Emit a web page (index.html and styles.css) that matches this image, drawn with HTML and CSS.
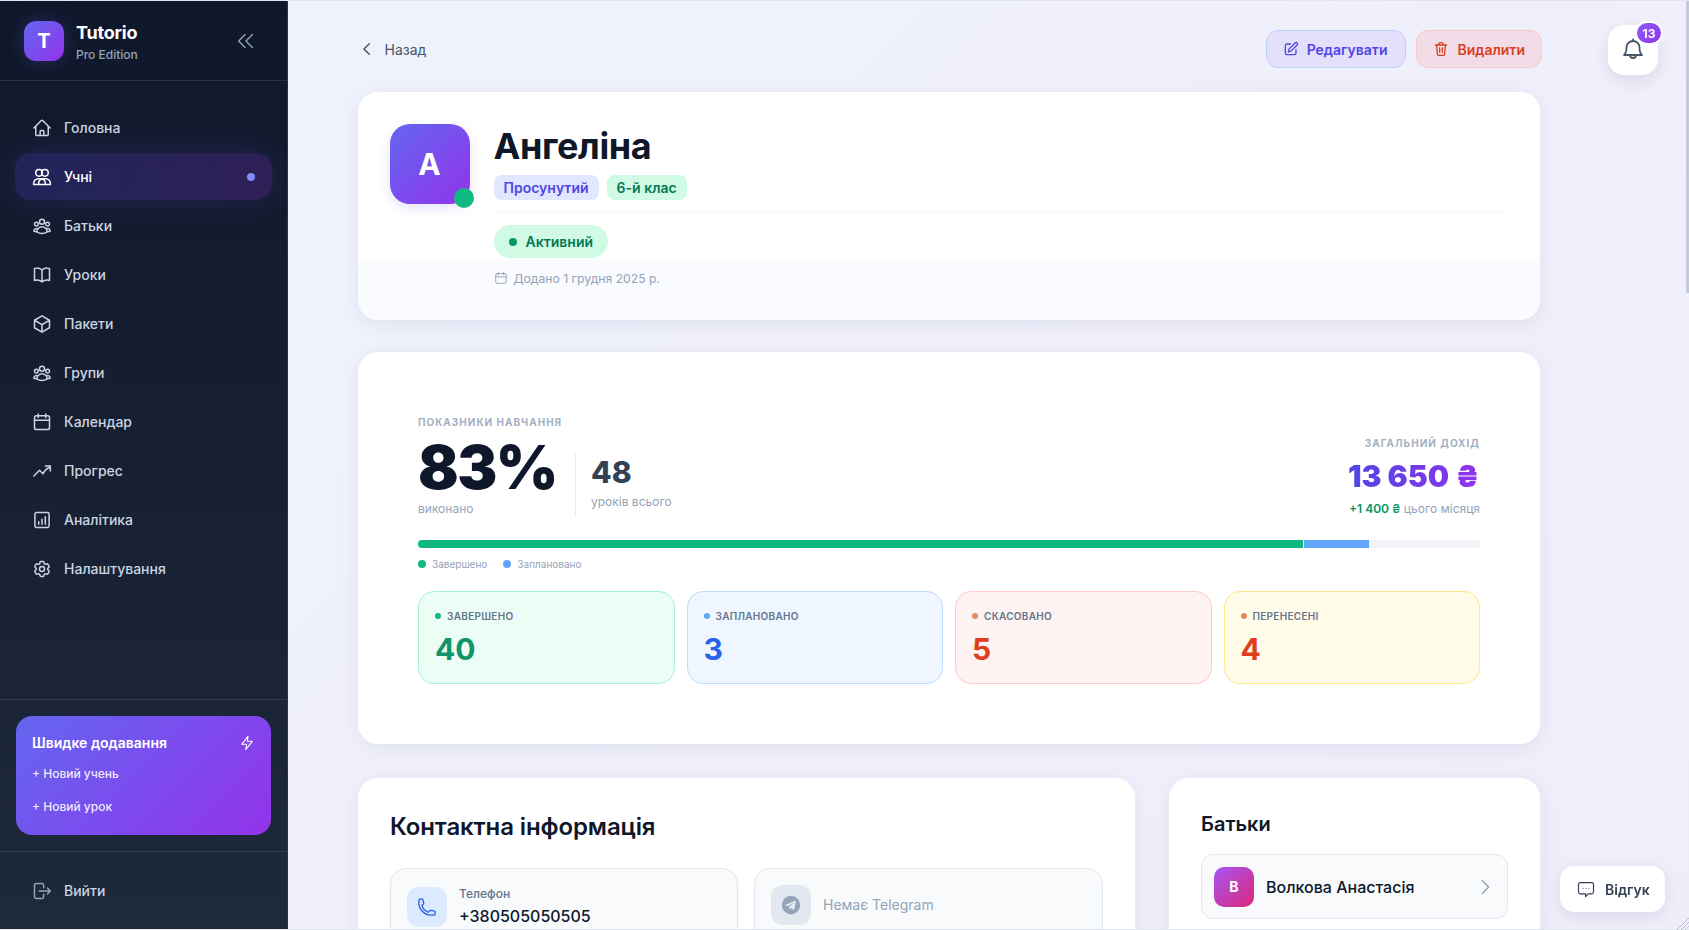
FILE: index.html
```html
<!DOCTYPE html>
<html lang="uk">
<head>
<meta charset="utf-8">
<title>Tutorio</title>
<link rel="stylesheet" href="styles.css">
</head>
<body>
<svg class="sprite" xmlns="http://www.w3.org/2000/svg">
  <symbol id="i-home" viewBox="0 0 24 24"><path d="M2.25 12l8.954-8.955c.44-.439 1.152-.439 1.591 0L21.75 12M4.5 9.75v10.125c0 .621.504 1.125 1.125 1.125H9.75v-4.875c0-.621.504-1.125 1.125-1.125h2.25c.621 0 1.125.504 1.125 1.125V21h4.125c.621 0 1.125-.504 1.125-1.125V9.75M8.25 21h8.25"/></symbol>
  <symbol id="i-users" viewBox="0 0 24 24"><circle cx="8.5" cy="7" r="4"/><circle cx="15.5" cy="7" r="4"/><path d="M2 21v-1.5A5.5 5.5 0 0 1 7.5 14h9a5.5 5.5 0 0 1 5.5 5.5V21zM12 14.5a5.5 5.5 0 0 0-4 5.5v1M12 14.5a5.5 5.5 0 0 1 4 5.5v1"/></symbol>
  <symbol id="i-group" viewBox="0 0 24 24"><path d="M18 18.72a9.094 9.094 0 003.741-.479 3 3 0 00-4.682-2.72m.94 3.198l.001.031c0 .225-.012.447-.037.666A11.944 11.944 0 0112 21c-2.17 0-4.207-.576-5.963-1.584A6.062 6.062 0 016 18.719m12 0a5.971 5.971 0 00-.941-3.197m0 0A5.995 5.995 0 0012 12.75a5.995 5.995 0 00-5.058 2.772m0 0a3 3 0 00-4.681 2.72 8.986 8.986 0 003.74.477m.94-3.197a5.971 5.971 0 00-.94 3.197M15 6.75a3 3 0 11-6 0 3 3 0 016 0zm6 3a2.25 2.25 0 11-4.5 0 2.25 2.25 0 014.5 0zm-13.5 0a2.25 2.25 0 11-4.5 0 2.25 2.25 0 014.5 0z"/></symbol>
  <symbol id="i-book" viewBox="0 0 24 24"><path d="M12 6.042A8.967 8.967 0 006 3.75c-1.052 0-2.062.18-3 .512v14.25A8.987 8.987 0 016 18c2.305 0 4.408.867 6 2.292m0-14.25a8.966 8.966 0 016-2.292c1.052 0 2.062.18 3 .512v14.25A8.987 8.987 0 0018 18a8.967 8.967 0 00-6 2.292m0-14.25v14.25"/></symbol>
  <symbol id="i-cube" viewBox="0 0 24 24"><path d="M21 7.5l-9-5.25L3 7.5m18 0l-9 5.25m9-5.25v9l-9 5.25M3 7.5l9 5.25M3 7.5v9l9 5.25m0-9v9"/></symbol>
  <symbol id="i-cal" viewBox="0 0 24 24"><rect x="3" y="4.5" width="18" height="16.5" rx="2.2"/><path d="M7.5 2.5v4M16.5 2.5v4M3 10h18"/></symbol>
  <symbol id="i-trend" viewBox="0 0 24 24"><path d="M2.2 18l6.8-6.8 4.2 4.2C15 11.5 18 8.8 21.8 7.6M16 6h6v6"/></symbol>
  <symbol id="i-chart" viewBox="0 0 24 24"><rect x="3.5" y="3" width="17" height="18" rx="2"/><path d="M8 17v-3M12 17v-6M16 17V8"/></symbol>
  <symbol id="i-cog" viewBox="0 0 24 24"><path d="M9.594 3.94c.09-.542.56-.94 1.11-.94h2.593c.55 0 1.02.398 1.11.94l.213 1.281c.063.374.313.686.645.87.074.04.147.083.22.127.324.196.72.257 1.075.124l1.217-.456a1.125 1.125 0 011.37.49l1.296 2.247a1.125 1.125 0 01-.26 1.431l-1.003.827c-.293.24-.438.613-.431.992a6.759 6.759 0 010 .255c-.007.378.138.75.43.99l1.005.828c.424.35.534.954.26 1.43l-1.298 2.247a1.125 1.125 0 01-1.369.491l-1.217-.456c-.355-.133-.75-.072-1.076.124a6.57 6.57 0 01-.22.128c-.331.183-.581.495-.644.869l-.213 1.28c-.09.543-.56.941-1.11.941h-2.594c-.55 0-1.02-.398-1.11-.94l-.213-1.281c-.062-.374-.312-.686-.644-.87a6.52 6.52 0 01-.22-.127c-.325-.196-.72-.257-1.076-.124l-1.217.456a1.125 1.125 0 01-1.369-.49l-1.297-2.247a1.125 1.125 0 01.26-1.431l1.004-.827c.292-.24.437-.613.43-.992a6.932 6.932 0 010-.255c.007-.378-.138-.75-.43-.99l-1.004-.828a1.125 1.125 0 01-.26-1.43l1.297-2.247a1.125 1.125 0 011.37-.491l1.216.456c.356.133.751.072 1.076-.124.072-.044.146-.087.22-.128.332-.183.582-.495.644-.869l.214-1.281z"/><circle cx="12" cy="12" r="3"/></symbol>
  <symbol id="i-logout" viewBox="0 0 24 24"><path d="M14 8V5a2 2 0 0 0-2-2H5a2 2 0 0 0-2 2v14a2 2 0 0 0 2 2h7a2 2 0 0 0 2-2v-3M8.5 12H22M18.5 8.5 22 12l-3.500 3.500"/></symbol>
  <symbol id="i-bolt" viewBox="0 0 24 24"><path d="M13.500 2 4 14h7.500L10 22l10-12.500h-7.500z"/></symbol>
  <symbol id="i-edit" viewBox="0 0 24 24"><path d="M11 4.500H6a2.500 2.500 0 0 0-2.500 2.500v11A2.500 2.500 0 0 0 6 20.500h11a2.500 2.500 0 0 0 2.500-2.500v-5"/><path d="M18.200 3a2.100 2.100 0 0 1 3 3L12 15.200l-4 1 1-4z"/></symbol>
  <symbol id="i-trash" viewBox="0 0 24 24"><path d="M3.500 6h17M9 6V4a1.500 1.500 0 0 1 1.500-1.500h3A1.500 1.500 0 0 1 15 4v2M5.500 6l1 13.500A2 2 0 0 0 8.500 21.500h7a2 2 0 0 0 2-2L18.500 6M10 10.500v6.500M14 10.500v6.500"/></symbol>
  <symbol id="i-bell" viewBox="0 0 24 24"><path d="M12 3a6.500 6.500 0 0 0-6.500 6.500c0 3.800-.8 6-2.500 7.500h18c-1.700-1.500-2.500-3.700-2.500-7.500A6.500 6.500 0 0 0 12 3zM12 1.500V3M9 17a3 3 0 0 0 6 0"/></symbol>
  <symbol id="i-phone" viewBox="0 0 24 24"><path d="M2.250 6.750c0 8.284 6.716 15 15 15h2.250a2.250 2.250 0 002.250-2.250v-1.372c0-.516-.351-.966-.852-1.091l-4.423-1.106c-.44-.11-.902.055-1.173.417l-.97 1.293c-.282.376-.769.542-1.210.380a12.035 12.035 0 01-7.143-7.143c-.162-.441.004-.928.380-1.210l1.293-.970c.363-.271.527-.734.417-1.173L6.963 3.102a1.125 1.125 0 00-1.091-.852H4.500A2.250 2.250 0 002.250 4.500v2.250z"/></symbol>
  <symbol id="i-chat" viewBox="0 0 24 24"><path d="M4.500 3.500h15A2.500 2.500 0 0 1 22 6v10a2.500 2.500 0 0 1-2.500 2.500H15L11.500 22v-3.500h-7A2.500 2.500 0 0 1 2 16V6a2.500 2.500 0 0 1 2.500-2.500zM8 11h.01M12 11h.01M16 11h.01"/></symbol>
</svg>

<div class="app">
  <aside class="sidebar">
    <div class="brand">
      <div class="brand-logo">T</div>
      <div class="brand-text">
        <div class="brand-name">Tutorio</div>
        <div class="brand-sub">Pro Edition</div>
      </div>
      <svg class="collapse" viewBox="0 0 24 24"><path d="M11 5l-7 7 7 7M19 5l-7 7 7 7"/></svg>
    </div>
    <nav class="nav">
      <a class="nav-item"><svg class="nav-icon"><use href="#i-home"/></svg>Головна</a>
      <a class="nav-item active"><svg class="nav-icon"><use href="#i-users"/></svg>Учні<span class="nav-dot"></span></a>
      <a class="nav-item"><svg class="nav-icon"><use href="#i-group"/></svg>Батьки</a>
      <a class="nav-item"><svg class="nav-icon"><use href="#i-book"/></svg>Уроки</a>
      <a class="nav-item"><svg class="nav-icon"><use href="#i-cube"/></svg>Пакети</a>
      <a class="nav-item"><svg class="nav-icon"><use href="#i-group"/></svg>Групи</a>
      <a class="nav-item"><svg class="nav-icon"><use href="#i-cal"/></svg>Календар</a>
      <a class="nav-item"><svg class="nav-icon"><use href="#i-trend"/></svg>Прогрес</a>
      <a class="nav-item"><svg class="nav-icon"><use href="#i-chart"/></svg>Аналітика</a>
      <a class="nav-item"><svg class="nav-icon"><use href="#i-cog"/></svg>Налаштування</a>
    </nav>
    <div class="quick-wrap">
      <div class="quick">
        <div class="quick-head"><span>Швидке додавання</span><svg class="quick-icon"><use href="#i-bolt"/></svg></div>
        <div class="quick-link">+ Новий учень</div>
        <div class="quick-link">+ Новий урок</div>
      </div>
    </div>
    <div class="logout-wrap">
      <a class="nav-item logout"><svg class="nav-icon"><use href="#i-logout"/></svg>Вийти</a>
    </div>
  </aside>

  <main class="main">
    <div class="topbar">
      <a class="back"><svg class="back-icon" viewBox="0 0 24 24"><path d="M15 5l-7 7 7 7"/></svg>Назад</a>
      <div class="actions">
        <button class="btn btn-edit"><svg class="btn-icon"><use href="#i-edit"/></svg>Редагувати</button>
        <button class="btn btn-del"><svg class="btn-icon"><use href="#i-trash"/></svg>Видалити</button>
      </div>
    </div>

    <section class="card profile">
      <div class="avatar">А<span class="avatar-dot"></span></div>
      <div class="profile-body">
        <h1 class="name">Ангеліна</h1>
        <div class="tags">
          <span class="tag tag-indigo">Просунутий</span>
          <span class="tag tag-green">6-й клас</span>
        </div>
        <div class="status-row">
          <span class="status"><i class="status-dot"></i>Активний</span>
        </div>
        <div class="added"><svg class="added-icon"><use href="#i-cal"/></svg>Додано 1 грудня 2025 р.</div>
      </div>
    </section>

    <section class="card metrics">
      <div class="metrics-top">
        <div class="metrics-left">
          <div class="overline">ПОКАЗНИКИ НАВЧАННЯ</div>
          <div class="kpis">
            <div class="kpi-main">
              <div class="percent">83%</div>
              <div class="kpi-note">виконано</div>
            </div>
            <div class="kpi-side">
              <div class="total">48</div>
              <div class="kpi-note">уроків всього</div>
            </div>
          </div>
        </div>
        <div class="metrics-right">
          <div class="overline">ЗАГАЛЬНИЙ ДОХІД</div>
          <div class="income">13 650 ₴</div>
          <div class="income-note"><b>+1 400 ₴</b> цього місяця</div>
        </div>
      </div>
      <div class="bar">
        <div class="bar-done"></div>
        <div class="bar-plan"></div>
      </div>
      <div class="legend">
        <span class="legend-item"><i class="ldot ldot-green"></i>Завершено</span>
        <span class="legend-item"><i class="ldot ldot-blue"></i>Заплановано</span>
      </div>
      <div class="stats">
        <div class="stat stat-green"><div class="stat-label"><i></i>ЗАВЕРШЕНО</div><div class="stat-num">40</div></div>
        <div class="stat stat-blue"><div class="stat-label"><i></i>ЗАПЛАНОВАНО</div><div class="stat-num">3</div></div>
        <div class="stat stat-red"><div class="stat-label"><i></i>СКАСОВАНО</div><div class="stat-num">5</div></div>
        <div class="stat stat-yellow"><div class="stat-label"><i></i>ПЕРЕНЕСЕНІ</div><div class="stat-num">4</div></div>
      </div>
    </section>

    <div class="bottom">
      <section class="card contact">
        <h2 class="contact-title">Контактна інформація</h2>
        <div class="contact-grid">
          <div class="contact-item">
            <div class="cicon cicon-blue"><svg class="phone-icon"><use href="#i-phone"/></svg></div>
            <div class="ctext"><div class="clabel">Телефон</div><div class="cvalue">+380505050505</div></div>
          </div>
          <div class="contact-item contact-empty">
            <div class="cicon cicon-gray"><svg class="tg-icon" viewBox="0 0 24 24"><circle class="tg-disc" cx="12" cy="12" r="11"/><path class="tg-plane" d="M5.500 11.800l11.600-4.800c.6-.2 1 .1.800.9l-2 9.300c-.1.600-.6.800-1.100.5l-3-2.200-1.500 1.400c-.2.200-.4.300-.7.300l.2-3 5.400-4.900c.2-.2 0-.3-.3-.1l-6.700 4.200-2.800-.9c-.6-.2-.6-.6.100-.7z"/></svg></div>
            <div class="cempty">Немає Telegram</div>
          </div>
        </div>
      </section>
      <section class="card parents">
        <h2 class="parents-title">Батьки</h2>
        <div class="parent-row">
          <div class="parent-avatar">В</div>
          <div class="parent-name">Волкова Анастасія</div>
          <svg class="parent-chev" viewBox="0 0 24 24"><path d="M9 5l7 7-7 7"/></svg>
        </div>
      </section>
    </div>
  </main>
</div>

<button class="bell"><svg class="bell-icon"><use href="#i-bell"/></svg><span class="bell-badge">13</span></button>
<button class="feedback"><svg class="feedback-icon"><use href="#i-chat"/></svg>Відгук</button>
<div class="scroll-thumb"></div>
<svg class="resizer" viewBox="0 0 12 12"><path d="M0 12 12 0M4 12l8-8M8 12l4-4"/></svg>
</body>
</html>
```
FILE: styles.css
```css
* { box-sizing: border-box; }
html, body { margin: 0; height: 100%; overflow: hidden; }
body { font-family: "Inter", "Noto Sans", sans-serif; color: #0f172a; background: #eff1fb; }
.sprite { display: none; }
svg { fill: none; stroke: currentColor; stroke-width: 1.6; stroke-linecap: round; stroke-linejoin: round; flex: none; }
h1, h2 { margin: 0; }
button { font-family: inherit; cursor: pointer; }

.app { display: flex; height: 930px; border-top: 1px solid #e2e5ee; border-bottom: 1px solid #e2e5ee; }

/* sidebar */
.sidebar { width: 288px; flex: none; display: flex; flex-direction: column; background: linear-gradient(180deg, #0f172a 0%, #1e293b 100%); border-right: 1px solid #2b3548; }
.brand { height: 80px; flex: none; display: flex; align-items: center; padding: 0 30px 0 24px; border-bottom: 1px solid rgba(255,255,255,.1); }
.brand-logo { width: 40px; height: 40px; border-radius: 12px; display: flex; align-items: center; justify-content: center; font-size: 20px; font-weight: 700; color: #fff; background: linear-gradient(135deg, #6366f1, #9333ea); box-shadow: 0 0 18px rgba(99,102,241,.25); }
.brand-text { margin: 3px 0 0 12px; flex: 1; }
.brand-name { font-size: 18px; font-weight: 700; color: #fff; line-height: 24px; letter-spacing: -.2px; }
.brand-sub { font-size: 12px; font-weight: 500; color: #94a3b8; line-height: 18px; margin-top: 1px; }
.collapse { width: 22px; height: 22px; color: #94a3b8; stroke-width: 1.5; }

.nav { flex: 1; padding: 23px 15px 0; display: flex; flex-direction: column; gap: 2px; }
.nav-item { height: 47px; display: flex; align-items: center; padding: 0 17px; gap: 12px; border-radius: 16px; font-size: 14px; font-weight: 500; color: #cbd5e1; }
.nav-icon { width: 20px; height: 20px; stroke-width: 1.8; }
.nav-item.active { color: #fff; background: linear-gradient(90deg, rgba(79,70,229,.24), rgba(147,51,234,.22)); box-shadow: 0 0 30px rgba(99,102,241,.18); }
.nav-dot { width: 8px; height: 8px; border-radius: 50%; background: #818cf8; margin-left: auto; }

.quick-wrap { padding: 16px; border-top: 1px solid rgba(255,255,255,.1); border-bottom: 1px solid rgba(255,255,255,.1); }
.quick { height: 119px; padding: 17px 16px 0; border-radius: 16px; background: linear-gradient(135deg, #6366f1, #9333ea); color: #fff; }
.quick-head { display: flex; justify-content: space-between; align-items: center; font-size: 14px; font-weight: 600; line-height: 20px; }
.quick-icon { width: 16px; height: 16px; }
.quick-link { font-size: 12px; font-weight: 500; line-height: 16px; color: rgba(255,255,255,.9); margin-top: 17px; }
.quick-head + .quick-link { margin-top: 13px; }

.logout-wrap { padding: 15px 15px 15px; height: 77px; }
.logout { color: #cbd5e1; }
.logout .nav-icon { color: #94a3b8; }

/* main */
.main { flex: 1; min-width: 0; padding: 29px 149px 0 69.500px; overflow: hidden; background: linear-gradient(135deg, #eff2fc 0%, #f0edfa 100%); }
.topbar { display: flex; justify-content: space-between; align-items: center; height: 38px; margin: 0 -2px 24px 0; }
.back { display: flex; align-items: center; gap: 9px; font-size: 14px; color: #475569; }
.back-icon { width: 18px; height: 18px; stroke-width: 2; }
.actions { display: flex; gap: 10px; }
.btn { height: 38px; padding: 0 16px; display: flex; align-items: center; gap: 8px; border-radius: 12px; font-size: 14px; font-weight: 600; }
.btn-icon { width: 16px; height: 16px; stroke-width: 2; }
.btn-edit { color: #4f46e5; background: #e4e0fb; border: 1px solid #c2d3fb; padding-right: 18px; }
.btn-del { color: #dd3f1e; background: #f2dce8; border: 1px solid #f9c9c9; }

.card { background: #fff; border-radius: 20px; box-shadow: 0 4px 20px rgba(30,41,89,.07); }

.profile { height: 228px; display: flex; padding: 32px 32px 0; margin-bottom: 32px; background: linear-gradient(#fff 168px, #fafbfe 168px); }
.avatar { position: relative; width: 80px; height: 80px; flex: none; border-radius: 20px; display: flex; align-items: center; justify-content: center; color: #fff; font-size: 30px; font-weight: 700; background: linear-gradient(135deg, #6366f1, #9333ea); box-shadow: 0 4px 12px rgba(99,102,241,.18); }
.avatar-dot { position: absolute; right: -4px; bottom: -4px; width: 20px; height: 20px; border-radius: 50%; background: #10b981; }
.profile-body { flex: 1; margin-left: 24px; }
.name { font-size: 36px; font-weight: 700; line-height: 44px; letter-spacing: -.4px; color: #0f172a; }
.tags { display: flex; gap: 8px; margin-top: 7px; }
.tag { height: 25px; padding: 0 10px; display: flex; align-items: center; border-radius: 8px; font-size: 14px; font-weight: 600; }
.tag-indigo { background: #e0e7ff; color: #4f46e5; }
.tag-green { background: #d1fae5; color: #047857; }
.status-row { margin-top: 12px; padding-top: 12px; border-top: 1px solid #f1f5f9; }
.status { display: inline-flex; align-items: center; gap: 9px; height: 33px; padding: 0 15px; border-radius: 17px; background: #d1fae5; color: #047857; font-size: 14px; font-weight: 600; }
.status-dot { width: 8px; height: 8px; border-radius: 50%; background: #059669; }
.added { display: flex; align-items: center; gap: 6px; margin-top: 11px; font-size: 12.200px; color: #94a3b8; height: 18px; }
.added-icon { width: 14px; height: 14px; }

.metrics { height: 392px; padding: 62px 60px 0 60.500px; margin-bottom: 34px; }
.metrics-top { display: flex; justify-content: space-between; align-items: flex-end; }
.overline { font-size: 10px; font-weight: 700; letter-spacing: 1px; color: #a3afc2; line-height: 16px; }
.kpis { display: flex; align-items: flex-end; margin-top: 5px; }
.kpi-main { padding-right: 18px; }
.percent { font-size: 60px; line-height: 64px; font-weight: 900; letter-spacing: -1.500px; color: #0f172a; }
.percent + .kpi-note { margin-top: 1px; }
.kpi-note { font-size: 12px; color: #94a3b8; line-height: 18px; }
.kpi-side { margin-bottom: 3px; padding-left: 15px; height: 61px; border-left: 1px solid #e2e8f0; }
.total { font-size: 30px; font-weight: 800; line-height: 36px; color: #334155; }
.kpi-side .kpi-note { margin-top: 3px; }
.metrics-right { text-align: right; }
.income { font-size: 30px; line-height: 38px; font-weight: 900; margin-top: 6px; display: inline-block; background: linear-gradient(90deg, #4f46e5, #9333ea); -webkit-background-clip: text; background-clip: text; color: transparent; }
.income-note { font-size: 12px; color: #94a3b8; line-height: 18px; margin-top: 5px; }
.income-note b { color: #059669; font-weight: 600; }

.bar { display: flex; gap: 1px; height: 8px; margin-top: 22px; border-radius: 4px; background: #f1f5f9; overflow: hidden; }
.bar-done { width: 83.300%; background: #10b981; }
.bar-plan { width: 6.200%; background: #60a5fa; }
.legend { display: flex; gap: 16px; margin-top: 9px; height: 14px; }
.legend-item { display: flex; align-items: center; gap: 6px; font-size: 10px; color: #94a3b8; }
.ldot { width: 8px; height: 8px; border-radius: 50%; }
.ldot-green { background: #10b981; }
.ldot-blue { background: #60a5fa; }

.stats { display: grid; grid-template-columns: repeat(4, 1fr); gap: 12px; margin-top: 20px; }
.stat { height: 93px; padding: 16px 16px 0; border-radius: 16px; border: 1px solid; }
.stat-label { display: flex; align-items: center; gap: 6px; font-size: 10px; font-weight: 600; letter-spacing: .3px; line-height: 16px; color: #64748b; }
.stat-label i { width: 6px; height: 6px; border-radius: 50%; }
.stat-num { font-size: 30px; line-height: 36px; font-weight: 700; margin-top: 7px; }
.stat-green { background: #ecfdf5; border-color: #a7f3d0; }
.stat-green i { background: #10b981; }
.stat-green .stat-num { color: #10956a; }
.stat-blue { background: #eff6ff; border-color: #bfdbfe; }
.stat-blue i { background: #60a5fa; }
.stat-blue .stat-num { color: #2563eb; }
.stat-red { background: #fef2f2; border-color: #fecaca; }
.stat-red i { background: #e5895b; }
.stat-red .stat-num { color: #dd3f1e; }
.stat-yellow { background: #fefce8; border-color: #fde68a; }
.stat-yellow i { background: #e5895b; }
.stat-yellow .stat-num { color: #dd3f1e; }

.bottom { display: flex; gap: 34px; align-items: flex-start; }
.contact { width: 777.500px; height: 300px; padding: 33px 32px 0 32.500px; flex: none; }
.contact-title { font-size: 24px; font-weight: 600; line-height: 32px; letter-spacing: -.12px; color: #0f172a; }
.contact-grid { display: grid; grid-template-columns: 348px 349px; gap: 16px; margin-top: 25px; }
.contact-item { height: 90px; display: flex; padding: 18px 16px; gap: 12px; align-items: flex-start; border: 1px solid #e2e8f0; border-radius: 16px; background: #f8fafc; }
.ctext { margin-top: -1px; }
.cicon { width: 40px; height: 40px; border-radius: 12px; display: flex; align-items: center; justify-content: center; flex: none; }
.cicon-blue { background: #dbeafe; color: #2563eb; }
.cicon-gray { background: #e2e8f0; margin-top: -2px; }
.phone-icon { width: 20px; height: 20px; }
.tg-icon { width: 20px; height: 20px; stroke: none; }
.tg-disc { fill: #94a3b8; }
.tg-plane { fill: #e2e8f0; }
.clabel { font-size: 12px; font-weight: 500; line-height: 16px; color: #64748b; }
.cvalue { font-size: 16px; font-weight: 500; line-height: 24px; color: #0f172a; margin-top: 2px; }
.cempty { font-size: 14px; color: #94a3b8; line-height: 40px; margin-top: -2px; }

.parents { flex: 1; height: 300px; padding: 32px; }
.parents-title { font-size: 20px; font-weight: 600; line-height: 28px; color: #0f172a; }
.parent-row { display: flex; align-items: center; height: 65px; margin-top: 16px; padding: 0 11px 0 12px; gap: 12px; border: 1px solid #e2e8f0; border-radius: 12px; background: #f8fafc; }
.parent-avatar { width: 40px; height: 40px; border-radius: 10px; display: flex; align-items: center; justify-content: center; color: #fff; font-size: 14px; font-weight: 700; background: linear-gradient(135deg, #a855f7, #db2777); }
.parent-name { flex: 1; font-size: 16px; font-weight: 500; color: #0f172a; }
.parent-chev { width: 22px; height: 22px; color: #94a3b8; }

/* floating */
.bell { position: fixed; left: 1608px; top: 25px; width: 50px; height: 50px; border: 0; border-radius: 16px; background: #fff; display: flex; align-items: center; justify-content: center; color: #475569; box-shadow: 0 6px 16px rgba(30,41,89,.1); padding: 0; }
.bell-icon { width: 24px; height: 24px; stroke-width: 1.800; }
.bell-badge { position: absolute; left: 27px; top: -4px; width: 28px; height: 24px; border-radius: 12px; border: 2px solid #fff; background: linear-gradient(135deg, #8b5cf6, #9333ea); color: #fff; font-size: 12px; font-weight: 700; display: flex; align-items: center; justify-content: center; }
.feedback { position: fixed; left: 1560px; top: 866px; width: 105px; height: 46px; border: 0; border-radius: 14px; background: #fff; display: flex; align-items: center; gap: 10px; padding: 0 0 0 17px; font-size: 14px; font-weight: 600; color: #334155; box-shadow: 0 4px 14px rgba(30,41,89,.1); }
.feedback-icon { width: 18px; height: 18px; }
.scroll-thumb { position: fixed; right: 0; top: 1px; width: 3px; height: 292px; background: #c3cbd8; }
.resizer { position: fixed; right: 0; bottom: 0; width: 12px; height: 12px; color: #aab2c4; stroke-width: .8; stroke-linecap: butt; }
```
